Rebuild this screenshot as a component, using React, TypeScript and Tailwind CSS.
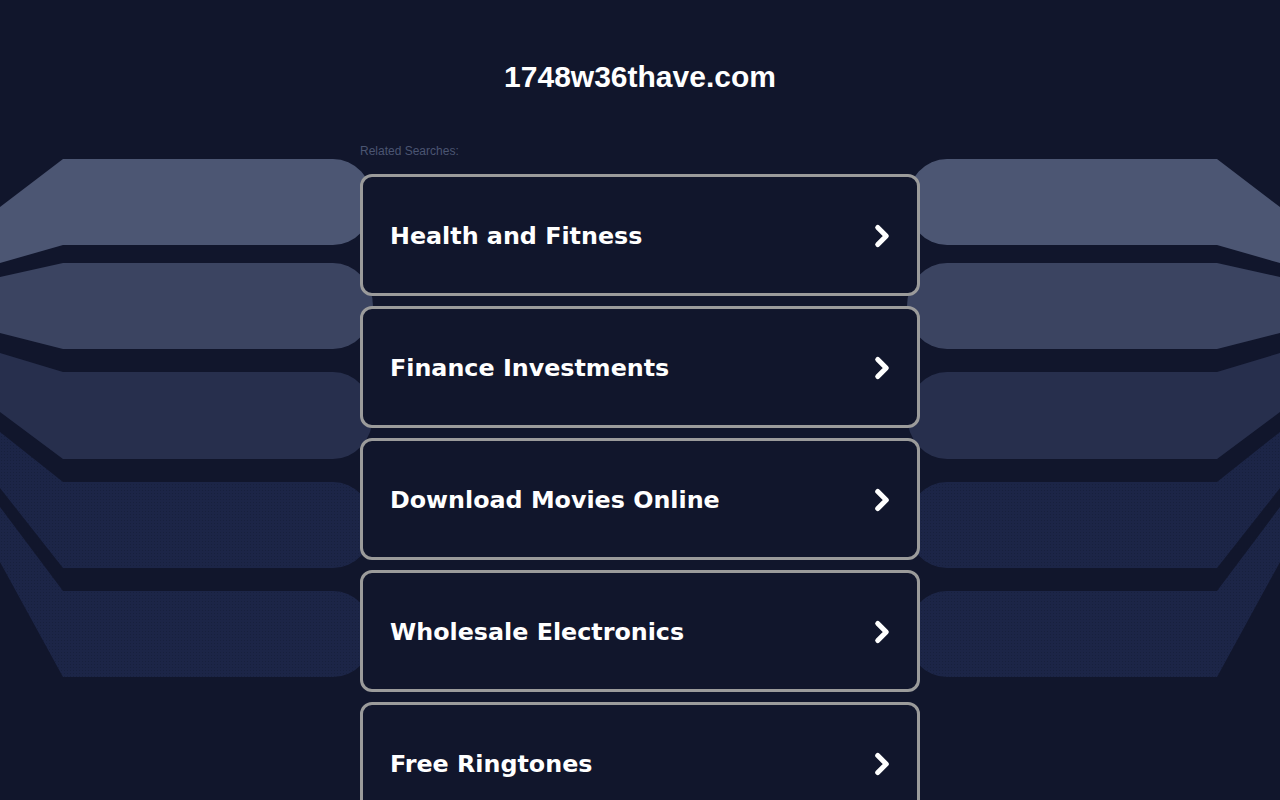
import { ChevronRight } from "lucide-react";

const searches = [
    "Health and Fitness",
    "Finance Investments",
    "Download Movies Online",
    "Wholesale Electronics",
    "Free Ringtones",
];

// left-side bands: top, bottom, and where the slanted edges meet x=0
const bands = [
    { top: 159, bot: 245, lt: 207, lb: 263, fill: "#4c5673" },
    { top: 263, bot: 349, lt: 277, lb: 333, fill: "#3b4461" },
    { top: 372, bot: 459, lt: 353, lb: 412, fill: "#272f4d" },
    { top: 482, bot: 568, lt: 432, lb: 488, fill: "url(#dots)" },
    { top: 591, bot: 677, lt: 507, lb: 562, fill: "url(#dots)" },
];

function bandPath(b: { top: number; bot: number; lt: number; lb: number }) {
    const ry = (b.bot - b.top) / 2;
    return `M0 ${b.lt} L63 ${b.top} L333 ${b.top} A40 ${ry} 0 0 1 333 ${b.bot} L63 ${b.bot} L0 ${b.lb} Z`;
}

function Backdrop() {
    return (
        <svg className="absolute left-0 top-0" width="1280" height="800" viewBox="0 0 1280 800">
            <defs>
                <pattern id="dots" width="3" height="3" patternUnits="userSpaceOnUse">
                    <rect width="3" height="3" fill="#1c2547" />
                    <rect x="1" y="1" width="1" height="1" fill="#17203d" />
                </pattern>
            </defs>
            <g>
                {bands.map((b, i) => (
                    <path key={i} d={bandPath(b)} fill={b.fill} />
                ))}
            </g>
            <g transform="translate(1280,0) scale(-1,1)">
                {bands.map((b, i) => (
                    <path key={i} d={bandPath(b)} fill={b.fill} />
                ))}
            </g>
        </svg>
    );
}

export default function App() {
    return (
        <div className="relative min-h-screen overflow-hidden bg-[#11162c]">
            <Backdrop />
            <div className="relative flex flex-col items-center pt-[60px]">
                <h1 className="text-[30px] font-bold leading-[34px] text-white font-['Liberation_Sans',Arial,sans-serif]">
                    1748w36thave.com
                </h1>

                <div className="w-[560px] mt-[49px]">
                    <p className="text-[12px] leading-[14px] pt-px text-[#4b5572] font-['Liberation_Sans',Arial,sans-serif] mb-[16px]">
                        Related Searches:
                    </p>

                    <div className="flex flex-col gap-[10px]">
                        {searches.map((s) => (
                            <a
                                key={s}
                                href="#"
                                className="flex items-center justify-between h-[122px] bg-[#11162c] border-[3px] border-[#9b9b9b] rounded-[12px] pl-[27px] pr-[18px]"
                            >
                                <span className="text-[23.8px] pt-[4px] font-bold text-white font-['DejaVu_Sans',Verdana,sans-serif]">
                                    {s}
                                </span>
                                <ChevronRight size={34} strokeWidth={3.6} className="text-white mt-[2px]" />
                            </a>
                        ))}
                    </div>
                </div>
            </div>
        </div>
    );
}
